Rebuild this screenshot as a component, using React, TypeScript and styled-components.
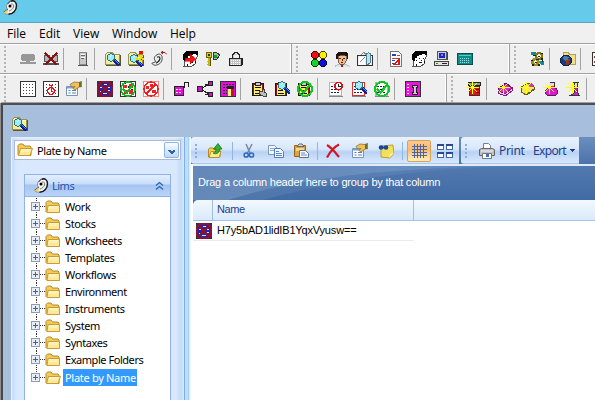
import React from 'react';
import styled, { createGlobalStyle } from 'styled-components';

const GlobalStyle = createGlobalStyle`
  *, *::before, *::after { box-sizing: border-box; }
  body { margin: 0; overflow: hidden; background: #efefef; }
`;

const ui = `'Noto Sans', 'Open Sans', sans-serif`;
const grid = `'Liberation Sans', Arial, sans-serif`;

/* ---------- application frame ---------- */

const Frame = styled.div`
  width: 595px;
  height: 400px;
  display: flex;
  flex-direction: column;
  overflow: hidden;
  background: #efefef;
  font: 11px/17px ${ui};
  color: #000;
`;

const TitleBar = styled.header`
  flex: none;
  height: 23px;
  padding-left: 2px;
  background: #66caea;
  border-bottom: 1px solid #58a5c4;
`;

const MenuBar = styled.nav`
  flex: none;
  display: flex;
  height: 20px;
  padding-left: 7px;
  background: #f0f0f0;
`;

const MenuItem = styled.span<{ $w: number }>`
  flex: none;
  width: ${p => p.$w}px;
  font: 12px/21px 'Open Sans', 'Noto Sans', sans-serif;
  white-space: nowrap;
`;

const ToolRow = styled.div`
  flex: none;
  display: flex;
  height: 30px;
  border-top: 1px solid #a0a0a0;
  box-shadow: inset 0 1px 0 #fff;
`;

const Grip = styled.span`
  flex: none;
  width: 2px;
  height: 26px;
  margin: 0 13px 0 4px;
  background: repeating-linear-gradient(#b4b4b4 0 2px, transparent 2px 4px);
`;

const Band = styled.div<{ $w: number }>`
  flex: none;
  display: flex;
  align-items: center;
  width: ${p => p.$w}px;
  height: 29px;
  padding-top: 1px;
  border-right: 1px solid #a0a0a0;
  box-shadow: inset -1px 0 0 #fff;
  &:first-child ${Grip} { margin-right: 14px; }
`;

const Slot = styled.span`
  flex: none;
  width: 16px;
  height: 16px;
  margin-right: 7px;
  svg { display: block; }
`;

const Divider = styled.i`
  flex: none;
  width: 1px;
  height: 22px;
  margin: 0 10px 0 -3px;
  background: #a3a3a3;
`;

/* ---------- child window ---------- */

const Child = styled.main`
  flex: 1;
  display: flex;
  flex-direction: column;
  border-top: 2px solid #4d4f55;
  border-left: 2px solid #45474d;
  margin-left: 1px;
  background: #a7bfdd;
  box-shadow: -1px 0 0 #8d8d8d, 0 -1px 0 #a0a0a0;
`;

const ChildTools = styled.div`
  flex: none;
  height: 32px;
  padding: 11px 0 0 9px;
  svg { display: block; }
`;

const Split = styled.div`
  flex: 1;
  display: flex;
  min-height: 0;
  padding-left: 8px;
`;

const SidePane = styled.aside`
  flex: none;
  width: 173px;
  padding: 2px 3px 0 2px;
  border-left: 1px solid #f1f6fd;
  border-top: 1px solid #e4effc;
  background: linear-gradient(90deg, #c8dcfa, #d9e8fd 5px 164px, #c3d9f8 169px, #dceafd);
`;

const Combo = styled.div`
  display: flex;
  align-items: center;
  width: 167px;
  height: 20px;
  padding-left: 2px;
  border: 1px solid #adb9dc;
  background: #fff;
  svg { flex: none; }
`;

const ComboText = styled.span`
  flex: 1;
  padding-left: 4px;
  white-space: nowrap;
  letter-spacing: -0.4px;
`;

const ComboButton = styled.button`
  width: 15px;
  height: 16px;
  margin: 0 1px 0 0;
  padding: 0;
  border: 1px solid #8db3e3;
  border-radius: 2px;
  background: linear-gradient(#fafdff, #dcecfc 45%, #bcdaf8);
  svg { display: block; margin: 4px auto 0; }
`;

const NavGroup = styled.section`
  width: 147px;
  height: 240px;
  margin: 14px 0 0 10px;
  border: 1px solid #91b2e6;
  background: #fff;
`;

const NavHead = styled.h2`
  display: flex;
  align-items: center;
  height: 22px;
  margin: 0;
  padding: 0 6px 0 8px;
  font: 11px/22px ${ui};
  letter-spacing: -0.5px;
  color: #2154b3;
  background: linear-gradient(#e2efff, #c9defa 42%, #a5c4f0 48%, #b9d4f8);
  border-bottom: 1px solid #91b2e6;
  span { flex: 1; padding-left: 3px; }
`;

const Tree = styled.ul`
  list-style: none;
  margin: 0;
  padding: 1px 0 0 6px;
`;

const Node = styled.li`
  display: flex;
  align-items: center;
  height: 17px;
  svg { flex: none; }
  &:last-child { margin-top: 1px; }
`;

const NodeText = styled.span<{ $sel?: boolean; $ls: number }>`
  height: 17px;
  margin-left: 2px;
  padding: 0 1px 0 2px;
  line-height: 17px;
  letter-spacing: ${p => p.$ls}px;
  white-space: nowrap;
  color: ${p => (p.$sel ? '#fff' : '#000')};
  background: ${p => (p.$sel ? '#3399ff' : 'transparent')};
`;

const Splitter = styled.div`
  flex: none;
  width: 7px;
  background: linear-gradient(90deg, #7eb0e4 0 1px, #bcdffb 1px 4px, #a6d0f6 4px 5px, #d9ebfd 5px 6px, #f2f8ff 6px);
`;

const ListPane = styled.section`
  flex: 1;
  display: flex;
  flex-direction: column;
  min-width: 0;
  background: #fff;
`;

const ListTools = styled.div`
  flex: none;
  display: flex;
  height: 27px;
  background: linear-gradient(#6a8fc0, #4b73aa);
`;

const Strip = styled.div<{ $w: number }>`
  flex: none;
  display: flex;
  align-items: center;
  width: ${p => p.$w}px;
  margin-right: 2px;
  height: 27px;
  padding-left: 4px;
  border-radius: 3px 0 0 3px;
  background: linear-gradient(#eaf3fe, #d7e7fa 45%, #b8d2f4 55%, #d8e8fc 96%, #89addd);
  svg { flex: none; display: block; }
`;

const StripGrip = styled.i<{ $gap: number }>`
  flex: none;
  width: 2px;
  height: 14px;
  margin-right: ${p => p.$gap}px;
  background: repeating-linear-gradient(#8aaddd 0 2px, transparent 2px 4px);
`;

const Cell = styled.span<{ $r: number }>`
  flex: none;
  width: 16px;
  margin-right: ${p => p.$r}px;
`;

const StripDivider = styled.i<{ $r: number }>`
  flex: none;
  width: 1px;
  height: 18px;
  margin-right: ${p => p.$r}px;
  background: #91b5e6;
`;

const Pressed = styled.span`
  display: flex;
  align-items: center;
  justify-content: center;
  flex: none;
  width: 24px;
  height: 22px;
  margin-right: 6px;
  border: 1px solid #d8a05a;
  border-radius: 2px;
  background: linear-gradient(#fbc98c, #fdb970 45%, #fecb85 60%, #fff0b8);
`;

const StripText = styled.span<{ $w: number; $ls: number }>`
  width: ${p => p.$w}px;
  flex: none;
  font: 12px/16px ${ui};
  letter-spacing: ${p => p.$ls}px;
  color: #1e3e8c;
`;

const GroupArea = styled.div`
  flex: none;
  display: grid;
  height: 36px;
  margin-left: 2px;
  border-top: 2px solid #dfebf8;
  > * { grid-area: 1 / 1; }
`;

const GroupText = styled.span`
  padding-left: 5px;
  font: 11px/33px ${grid};
  letter-spacing: -0.2px;
  color: #fff;
  white-space: nowrap;
`;

const HeaderWrap = styled.div`
  flex: none;
  margin-left: 2px;
  background: #426ca4;
`;

const HeaderRow = styled.div`
  display: flex;
  height: 21px;
  border-bottom: 1px solid #a5c3e8;
  border-top-left-radius: 5px;
  background: linear-gradient(#f3f8fe, #e6f1fd 50%, #d9e9fc);
`;

const HeaderCell = styled.div<{ $w: number }>`
  flex: none;
  width: ${p => p.$w}px;
  padding-left: 4px;
  font: 11px/19px ${grid};
  letter-spacing: -0.4px;
  color: #1e3e8c;
  border-right: 1px solid #9fbee6;
`;

const Row = styled.div`
  display: flex;
  align-items: center;
  width: 221px;
  height: 20px;
  margin-left: 2px;
  padding-left: 3px;
  border-bottom: 1px solid #ebebeb;
`;

const RowText = styled.span`
  padding: 0 0 1px 5px;
  font: 11px/17px ${grid};
  letter-spacing: -0.17px;
  white-space: nowrap;
`;

/* ---------- icons ---------- */

const I = ({ children, w = 16, h = 16, soft }: { children: React.ReactNode; w?: number; h?: number; soft?: boolean }) => (
  <svg width={w} height={h} viewBox={`0 0 ${w} ${h}`} shapeRendering={soft ? 'auto' : 'crispEdges'} fill="none">
    {children}
  </svg>
);

const Burst = () => (
  <path d="M6.500 1v12M0 6.500h13M2 2l9 9M11 2l-9 9" stroke="#ffff10" strokeWidth="1.400" />
);

const Glass = ({ x = 0, y = 0 }: { x?: number; y?: number }) => (
  <g transform={`translate(${x} ${y})`}>
    <path d="M8.500 8.500l6 6" stroke="#1020a0" strokeWidth="3" />
    <path d="M9.500 8.500l5 5" stroke="#38a8f0" />
    <circle cx="6" cy="6.500" r="3.600" fill="#98f0ff" stroke="#30707c" />
    <path d="M4.500 6.500l2-2" stroke="#fff" />
  </g>
);

const FinderFolder = () => (
  <>
    <path d="M.5 13V3.500l2-2h5l1 2h6V13z" fill="#f5eca0" stroke="#9a9350" />
    <path d="M2 4.500h12" stroke="#fffbd0" />
    <path d="M15.500 4v10H1" stroke="#5a5530" />
  </>
);

const Swan = () => (
  <I soft>
    <path d="M8.500 1.500c3-1.700 6 .3 6 4 0 5-3.500 8.700-8 8.700-3 0-5-1-5-2.300L6 9.700C3.500 8 4 3 8.500 1.500z" fill="#f2f2f2" stroke="#8a8a8a" />
    <path d="M8.500 1.300c3.200-1.500 6 .5 6 4.200 0 5-3.500 8.700-8 8.700" stroke="#151515" strokeWidth="1.400" />
    <path d="M6 4c0-1 1-2 2-2.300M5.500 9.500L2 12" stroke="#333" />
    <path d="M9 4c2.500-.5 3 1.500 2.500 3-.7 2-2.500 3.500-4.500 4" stroke="#777" />
    <circle cx="8" cy="6" r="1.500" fill="#000" />
    <path d="M1.500 12.500l3-2.500 1.500 1.500-2 2z" fill="#e8d34a" />
  </I>
);

const Server = () => (
  <I><path d="M5.500 1.500h7v12h-7z" fill="#c9c9c9" stroke="#8a8a8a" /><path d="M7 3.500h4M7 6.500h4" stroke="#fff" /><path d="M7 4.500h4M7 7.500h3" stroke="#666" /><path d="M12.500 2v12" stroke="#555" /><path d="M4 14.500h10" stroke="#555" /></I>
);

const Plate = ({ clock, cross, check, slash }: { clock?: boolean; cross?: boolean; check?: boolean; slash?: boolean }) => (
  <I>
    <rect x=".5" y=".5" width="15" height="15" fill={cross ? '#2222b8' : '#fff'} stroke={slash ? '#e88' : '#333'} />
    {!check && !slash && !cross && [3, 6, 9, 12].map(y => <path key={y} d={`M3 ${y + 0.5}h11`} stroke="#444" strokeWidth="1.500" strokeDasharray="1 2" />)}
    {clock && <><circle cx="8" cy="10" r="3.500" fill="#fff" stroke="#e81010" strokeWidth="1.500" /><path d="M8 4v6h2M6 4.500h4" stroke="#e81010" /></>}
    {cross && <><path d="M7 3.500h3M3 6.500h2M11 6.500h2M7 7.500h1M3 10.500h2M11 9.500h2M6 12.500h4M9 5.500h1" stroke="#dfe0ff" /><path d="M4 1h8l3 3v8l-3 3H4l-3-3V4z" stroke="#8a1428" strokeWidth="1.500" /><path d="M3 3l10 10M13 3L3 13" stroke="#8a1428" strokeWidth="2" /></>}
    {check && <><path d="M3 4h4v3H3zM9 3h4v4H9zM4 9h4v4H4zM9 9h4v4H9z" fill="#ee2020" /><path d="M5 2h1v1H5zM8 5h1v2H8zM11 8h2v1h-2z" fill="#222" /><circle cx="8" cy="8" r="7" stroke="#10b820" strokeWidth="1.800" /><path d="M3 8l3.500 3.500L13 4" stroke="#10b820" strokeWidth="2" /></>}
    {slash && <><circle cx="8" cy="8" r="7" stroke="#f02020" strokeWidth="1.500" /><path d="M3 13L13 3" stroke="#f02020" strokeWidth="1.600" /><path d="M3 5h3v3H3zM9 9h4v3H9zM7 3h3v3H7zM4 10h2v2H4z" fill="#f02020" /></>}
  </I>
);

const Properties = () => (
  <I soft>
    <path d="M.5 5.500h11v9H.5z" fill="#fdfdff" stroke="#7793b8" />
    <path d="M1 6h10v1.500H1z" fill="#6ea5de" />
    <path d="M2.500 9.500h2M2.500 12h2M6 9.500h4M6 12h4" stroke="#5580b4" />
    <path d="M4 3.500l4-2.500 5 .5 3-1v5l-3 .5-4 3-2-1.500 2-2-3 .5z" fill="#f0c060" stroke="#937024" strokeWidth=".8" />
    <path d="M13 1l2.500-.5V6L13 6z" fill="#66722c" />
  </I>
);

const Head = ({ red }: { red?: boolean }) => (
  <I>
    <path d="M2 15l1-4-1-3 1-5 4-2h8v5l-2 4v3l-3 2z" fill="#fff" stroke="#555" />
    <path d="M1 8V3l3-3h12v4h-2V3h-3v1H8v1H6v2H4v3H2z" fill="#000" />
    <path d="M8 7h1v1H8zM12 7h1v1h-1zM10 9h1v1h-1zM8 11h3v1H8zM5 9h1v1H5zM13 10h1v2h-1zM5 13h1v2H5z" fill="#111" />
    {red && <path d="M3 7h5V3l6 5-6 5v-3H3z" fill="#f51414" stroke="#b00000" strokeWidth=".5" />}
  </I>
);

const CheckRing = () => (
  <><circle cx="8" cy="8" r="7" stroke="#12c424" strokeWidth="2" /><path d="M3 8l3.500 3.500L13 4" stroke="#12c424" strokeWidth="2.200" /></>
);

const Clip = ({ kind }: { kind: 'hand' | 'glass' | 'check' }) => (
  <I>
    <path d="M1.500 2.500h11v12h-11z" fill="#a01010" stroke="#1b1b1b" />
    <path d="M3 4h8v10H3z" fill="#ffec68" />
    <path d="M4.500 1h5v3h-5z" fill="#ccc" stroke="#222" />
    <path d="M4 6.500h6M4 9.500h5M4 12.500h6" stroke="#111" />
    {kind === 'hand' && <path d="M8.500 10.500h3V8h2v3l1.500 1v3h-3l-3.500-2z" fill="#bbb" stroke="#444" />}
    {kind === 'glass' && <Glass x={2} y={-2} />}
    {kind === 'check' && <CheckRing />}
  </I>
);

const Sheet = ({ kind }: { kind: 'clock' | 'glass' | 'check' }) => (
  <I>
    <path d="M1.500 1.500h12v13h-12z" fill="#fff" stroke={kind === 'glass' ? '#e03030' : '#b4b4b4'} />
    <path d="M3 5.500h9M3 8.500h9M3 11.500h9" stroke="#202050" strokeWidth="1.500" strokeDasharray="2 1" />
    <path d="M1 15.500h14" stroke="#888" />
    {kind === 'clock' && <><circle cx="10.500" cy="5" r="3.600" fill="#fff" stroke="#d81616" strokeWidth="1.800" /><path d="M10.500 3v2.500h2" stroke="#222" /></>}
    {kind === 'glass' && <Glass x={2} y={-2} />}
    {kind === 'check' && <CheckRing />}
  </I>
);

const FolderIcon = ({ open }: { open?: boolean }) => (
  <I soft h={14}>
    <path d="M1 11.500V2.500L2.500 1H6l1.500 2H13l1 1v8.500H2z" fill="#f2cc55" stroke="#b6882c" />
    <path d={open ? 'M3.500 5.500h12L13 12.500H1.500z' : 'M3 5.500h11.500v7H2z'} fill="#ffe998" stroke="#c89b35" />
    <path d="M4 6.500h9M3.500 8h9" stroke="#fff6cc" />
  </I>
);

const icons: Record<string, React.ReactNode> = {
  net: <I><path d="M2 3h12v1h1v5h-1v1H2V9H1V4h1zM0 11h16v2H0z" fill="#989898" /><path d="M6 10h4v1H6z" fill="#989898" /></I>,
  netOff: <I><path d="M1.500 4.500h5v6h-5zM9.500 4.500h5v6h-5z" fill="#b4b4b4" stroke="#555" /><path d="M0 12.500h16" stroke="#555" strokeWidth="2" /><path d="M2 2l12 12M14 2L2 14" stroke="#8b1010" strokeWidth="2" /></I>,
  server: <Server />,
  find: <I><FinderFolder /><Glass /></I>,
  findRun: <I><FinderFolder /><Glass y={1} /><path d="M11 0h4v3h-4z" fill="#e81010" /><path d="M10 5h4l-2 3h4M10 7l-2 2M12 8v3" stroke="#f5d900" strokeWidth="1.500" /><path d="M9 4h1M13 8h1M10 10l-2 1" stroke="#222" /></I>,
  swanBack: <I soft><g transform="translate(0 2) scale(.86)"><path d="M7 2c3-2 6 0 6 4 0 5-4 9-10 8l-2-2 5-2C3 8 3 4 7 2z" fill="#eee" stroke="#333" /><path d="M7 5c3-2 4 1 3 3s-2 3-4 4" stroke="#222" strokeWidth="1.400" /></g><path d="M10 1.500h4l2 2M12 0l-2 1.500L12 3" stroke="#a01818" /></I>,
  headArrow: <Head red />,
  keys: <I><path d="M1.500 1.500h5v5h-5z" fill="#e0cc20" stroke="#6b6408" /><path d="M3 3h2v2H3z" fill="#333" /><path d="M3 7h3v8H3zM2 10h1v1H2zM2 13h1v1H2z" fill="#c8b41a" /><path d="M5.500 7v8" stroke="#575000" /><path d="M8 2l3-1 4 3-3 4-3 1z" fill="#a8b8a8" stroke="#333" /><path d="M9 4h3v3H9z" fill="#10a020" /></I>,
  lock: <I><path d="M4.500 9V4l2-2.500h3l2 2.500v5" stroke="#222" strokeWidth="1.400" /><path d="M5.500 8V5l1.500-2h2" stroke="#ccc" /><path d="M1.500 7.500h12v7h-12z" fill="#c4c4c4" stroke="#222" /><path d="M3 9.500h10M3 11.500h10M3 13.500h10" stroke="#fff" strokeDasharray="1 1" /><path d="M14.500 7v7" stroke="#222" /></I>,
  balls: <I><circle cx="4" cy="4" r="3.700" fill="#f01010" stroke="#400" /><circle cx="12" cy="4" r="3.700" fill="#ffef00" stroke="#440" /><circle cx="4" cy="12" r="3.700" fill="#10d820" stroke="#040" /><circle cx="12" cy="12" r="3.700" fill="#1010d8" stroke="#004" /></I>,
  person: <I><path d="M1 16v-1l4-2h6l4 2v1z" fill="#dce6ee" stroke="#8b97a0" strokeWidth=".5" /><path d="M4 4h8v6l-2 3H6l-2-3z" fill="#f0bd94" stroke="#6a4020" strokeWidth=".8" /><path d="M2 8V3l2-2h8l2 2v5h-1V5h-2V4H6v1H4v3z" fill="#1a1412" /><path d="M5 7.500h2M9 7.500h2M7 11.500h2M8 8v2" stroke="#432a1c" /><path d="M7 14h2v2H7z" fill="#a01818" /></I>,
  attach: <I><path d="M.5 4.500h15v10H.5z" fill="#eee" stroke="#333" /><path d="M2 6h6v8H2z" fill="#fff" /><path d="M4 4L7 1l2 3M3 11l5-5" stroke="#888" /><path d="M9.500 13V2.500h1l1-1 1.500 1V12l-2 1.500z" fill="#bfe0e8" stroke="#4e8293" /></I>,
  report: <I><path d="M2.500.5h8l3 3v12h-11z" fill="#fff" stroke="#777" /><path d="M4 3h4v2H4z" fill="#24b" /><path d="M9 4.500h3M4 7.500h8" stroke="#c04040" /><path d="M4 9.500h3M4 12.500h2" stroke="#2840c0" /><path d="M6 13.500l5-5v5z" fill="#fff" stroke="#e01818" strokeWidth="1.200" /></I>,
  head: <Head />,
  computer: <I><path d="M3.500.5h9v8h-9z" fill="#d4d4d4" stroke="#555" /><path d="M5 2h6v5H5z" fill="#1820d8" /><path d="M7 3h2v2H7z" fill="#7c86ff" /><path d="M13.500 1v8M.5 10.500h14v4H.5z" fill="#e2e2e2" stroke="#444" /><path d="M8 12.500h5" stroke="#222" /><path d="M2 12.500h2" stroke="#10a010" /></I>,
  keypad: <I><path d="M.5 2.500h15v11H.5z" fill="#108b8b" stroke="#054f4f" /><path d="M2 4.500h12" stroke="#60c4c4" /><path d="M3 7.500h10M3 9.500h10M3 11.500h10" stroke="#94dddd" strokeDasharray="1 1" /></I>,
  gears: <I><path d="M2 2h3v3M11 11h2v3" stroke="#108c98" strokeWidth="3" /><circle cx="10" cy="5" r="3" stroke="#7e7712" strokeWidth="2.600" /><circle cx="6.500" cy="11" r="3" stroke="#9a9218" strokeWidth="2.600" /><path d="M4 4h3v1H4zM7 8h3v1H7zM12 2h2v1h-2zM3 13h2v2H3zM9 13h2v2H9zM12 7h2v2h-2zM9 5h2v1H9zM6 11h2v1H6zM2 9h2v1H2zM13 9h1v2h-1z" fill="#222" /></I>,
  globe: <I><path d="M3.500 7V1.500h5l1 2h6v10h-7" fill="#f1e088" stroke="#b5a050" /><circle cx="6" cy="9.500" r="5.500" fill="#193f7b" stroke="#112244" /><path d="M2 7l3-2 4 1-1 3-3 1z" fill="#4c7eb0" /><path d="M6 9l4-1-1 5-3 1z" fill="#9c3622" /></I>,
  list: <I><path d="M1.500 1.500h14v13h-14z" fill="#fff" stroke="#333" /><path d="M3 5.500h12M3 10.500h12" stroke="#c22" strokeWidth="2" /></I>,
  plate: <Plate />,
  plateClock: <Plate clock />,
  props: <Properties />,
  plateCross: <Plate cross />,
  plateCheck: <Plate check />,
  plateSlash: <Plate slash />,
  pin: <I><path d="M.5 5.500h9v9h-9z" fill="#e010d8" stroke="#222" /><path d="M2 8.500h6M2 11.500h6" stroke="#fff" strokeDasharray="2 1" /><path d="M10.500 7V1.500h4V6" stroke="#222" strokeWidth="1.700" /></I>,
  branch: <I><path d="M.5 5.500h5v5h-5zM11.500.5h4v4h-4zM11.500 11.500h4v4h-4z" fill="#d010c8" stroke="#222" /><path d="M6 7l5-4M6 9l5 4" stroke="#222" /><path d="M8 3h2v2M8 13h2v-2" stroke="#222" /></I>,
  plateTool: <I><path d="M.5.5h15v15H.5z" fill="#e010d8" stroke="#333" /><path d="M3 3.500h11M3 6.500h4M3 9.500h4M3 12.500h4" stroke="#222" strokeDasharray="2 1" /><path d="M7 5h7v3H7z" fill="#222" /><path d="M8 8h3v7H8z" fill="#fff08a" /><path d="M11 8h3v7h-3z" fill="#c01818" /></I>,
  clipHand: <Clip kind="hand" />, clipFind: <Clip kind="glass" />, clipCheck: <Clip kind="check" />,
  sheetClock: <Sheet kind="clock" />, sheetFind: <Sheet kind="glass" />, sheetCheck: <Sheet kind="check" />,
  info: <I><path d="M.5.5h15v15H.5z" fill="#e616dc" stroke="#333" /><path d="M3 3v10" stroke="#fff" strokeWidth="2" strokeDasharray="1 2" /><path d="M7.500 4.500h5v2h-1v5h1v2h-5v-2h1v-5h-1z" fill="#ccc" stroke="#222" /></I>,
  beaker: <I><path d="M3.500 5.500h10v9h-10z" fill="#e81010" stroke="#333" /><path d="M2.500 1.500h12v3h-12z" fill="#999" stroke="#222" /><path d="M10 8.500h3M10 11.500h3" stroke="#770808" /><Burst /></I>,
  newBook: <I><path d="M1 8l8-6 6 5-8 8z" fill="#dc2bcb" stroke="#5c1266" /><path d="M2 10l6 3 7-6v3l-7 5-7-3z" fill="#f2c4ef" stroke="#7c1880" /><Burst /></I>,
  newBox: <I><path d="M1 6l8-4 6 5-9 7-5-3z" fill="#eee072" stroke="#685b12" /><path d="M8 4l3-2 3 3-3 2z" fill="#e22bd0" stroke="#555" strokeWidth=".5" /><path d="M3 12l4 2 8-6" stroke="#685b12" /><Burst /></I>,
  newFlask: <I><path d="M6.500 1.500h5v4l3 4v3l-2 2h-8l-2-2v-3l4-4z" fill="#df18ce" stroke="#502050" /><path d="M7 2h4v3H7z" fill="#ddd" /><Burst /></I>,
  newCylinder: <I><path d="M8.500 1.500h3v10l2 3h-9l4-3z" fill="#d818d0" stroke="#334" /><path d="M9 2h2v4H9z" fill="#ddd" /><path d="M6 1.500h7M3 14.500h11" stroke="#334" /><Burst /></I>,
};

const Tools = ({ names }: { names: string }) => (
  <>
    {names.split(' ').map((n, i) => (n === '|' ? <Divider key={i} /> : <Slot key={i}>{icons[n]}</Slot>))}
  </>
);

const Expander = ({ last }: { last?: boolean }) => (
  <I w={14} h={17}>
    <path d={last ? 'M5.500 0v5' : 'M5.500 0v17'} stroke="#333" strokeDasharray="1 1" />
    <path d="M9 8.500h5" stroke="#333" strokeDasharray="1 1" />
    <rect x=".5" y="4.500" width="8" height="8" rx="1" fill="#e9eef6" stroke="#8f9cb5" />
    <path d="M2 8.500h5M4.500 6v5" stroke="#4c608c" />
  </I>
);

const nodes: [string, number][] = [
  ['Work', -0.4], ['Stocks', -0.4], ['Worksheets', -0.4], ['Templates', -0.4], ['Workflows', -0.35], ['Environment', -0.42],
  ['Instruments', -0.35], ['System', -0.4], ['Syntaxes', -0.4], ['Example Folders', -0.45], ['Plate by Name', -0.3],
];

export default function App() {
  return (
    <Frame>
      <GlobalStyle />
      <TitleBar><Swan /></TitleBar>
      <MenuBar>
        <MenuItem $w={32}>File</MenuItem>
        <MenuItem $w={34}>Edit</MenuItem>
        <MenuItem $w={39}>View</MenuItem>
        <MenuItem $w={58}>Window</MenuItem>
        <MenuItem $w={40}>Help</MenuItem>
      </MenuBar>
      <ToolRow>
        <Band $w={292}><Grip /><Tools names="net netOff | server | find findRun swanBack | headArrow keys lock" /></Band>
        <Band $w={218}><Grip /><Tools names="balls person attach | report head computer keypad" /></Band>
        <Band $w={140}><Grip /><Tools names="gears | globe | list" /></Band>
      </ToolRow>
      <ToolRow>
        <Band $w={447}><Grip /><Tools names="plate plateClock props | plateCross plateCheck plateSlash | pin branch plateTool | clipHand clipFind clipCheck | sheetClock sheetFind sheetCheck | info" /></Band>
        <Band $w={200}><Grip /><Tools names="beaker | newBook newBox newFlask newCylinder |" /></Band>
      </ToolRow>
      <Child>
        <ChildTools>{icons.find}</ChildTools>
        <Split>
          <SidePane>
            <Combo>
              <FolderIcon open />
              <ComboText>Plate by Name</ComboText>
              <ComboButton><I w={7} h={5}><path d="M0 0h2l1.500 1.500L5 0h2v1L3.500 4.500 0 1z" fill="#31629f" /></I></ComboButton>
            </Combo>
            <NavGroup>
              <NavHead>
                <Swan />
                <span>Lims</span>
                <I soft w={9} h={10}><path d="M1 4.500l3.500-3 3.500 3M1 8.500l3.500-3 3.500 3" stroke="#2d62b8" strokeWidth="1.300" /></I>
              </NavHead>
              <Tree>
                {nodes.map(([name, ls], i) => {
                  const last = i === nodes.length - 1;
                  return (
                    <Node key={name}>
                      <Expander last={last} />
                      <FolderIcon open={last} />
                      <NodeText $sel={last} $ls={ls}>{name}</NodeText>
                    </Node>
                  );
                })}
              </Tree>
            </NavGroup>
          </SidePane>
          <Splitter />
          <ListPane>
            <ListTools>
              <Strip $w={268}>
                <StripGrip $gap={10} />
                <Cell $r={9}>
                  <I soft><path d="M1.500 14V6l1.500-1h3l1 1.500h6V14z" fill="#f4d04f" stroke="#b88a20" /><path d="M2 14.500l2-6h10l-2 6z" fill="#ffeb92" stroke="#bd9227" /><path d="M6 10c2 0 3-1 3-4H6.500L11 .5 15 6h-2.500c0 4-3 6-6.500 4z" fill="#35b037" stroke="#157519" strokeWidth=".8" /></I>
                </Cell>
                <StripDivider $r={8} />
                <Cell $r={11}>
                  <I soft><path d="M5 1l4 9M11 1L6.500 10" stroke="#7787a2" strokeWidth="1.500" /><circle cx="5.200" cy="12" r="2.100" stroke="#2f66c0" strokeWidth="1.500" /><circle cx="10.500" cy="12" r="2.100" stroke="#2f66c0" strokeWidth="1.500" /></I>
                </Cell>
                <Cell $r={9}>
                  <I soft><path d="M.5 2.500h6l3 3v6h-9z" fill="#f4f9ff" stroke="#7699ca" /><path d="M2 5.500h4M2 7.500h4" stroke="#86aadc" /><path d="M6.500 5.500h6l3 3v6h-9z" fill="#f4f9ff" stroke="#5479b5" /><path d="M8 8.500h3M8 10.500h6M8 12.500h6" stroke="#4c86d8" /></I>
                </Cell>
                <Cell $r={8}>
                  <I soft><path d="M1.500 2.500h11v11h-11z" fill="#dda540" stroke="#966515" /><path d="M4 3.500L6 1h3l2 2.500z" fill="#ddd" stroke="#666" /><path d="M3 5h8v3H3z" fill="#f5d98a" /><path d="M6.500 7.500h6l3 3v4h-9z" fill="#f5f9ff" stroke="#666f82" /><path d="M8 10h4M8 12h6" stroke="#5c8dd0" /></I>
                </Cell>
                <StripDivider $r={7} />
                <Cell $r={11}>
                  <I soft><path d="M2 2c5 3 8 7 12 12M14 1.500C9 4 5 9 2 14.500" stroke="#cf1a2b" strokeWidth="2.200" /></I>
                </Cell>
                <Cell $r={10}><Properties /></Cell>
                <Cell $r={8}>
                  <I soft><path d="M3 3l12-1 1 8-4 5-9-1z" fill="#f5df58" stroke="#aa8f20" strokeWidth=".8" /><path d="M11 15l1-4 4-1z" fill="#fff5b0" /><circle cx="3" cy="4.500" r="2.300" fill="#1746a0" /><circle cx="8" cy="4.500" r="2.300" fill="#1746a0" /><path d="M3 4.500h5" stroke="#1746a0" strokeWidth="2" /></I>
                </Cell>
                <StripDivider $r={4} />
                <Pressed><I w={15} h={14}><path d="M0 2.500h15M0 5.500h15M0 8.500h15M0 11.500h15M2.500 0v14M5.500 0v14M8.500 0v14M11.500 0v14" stroke="#4866a4" /></I></Pressed>
                <I>{[[0, 1], [9, 1], [0, 9], [9, 9]].map(([x, y]) => <g key={`${x}-${y}`}><rect x={x + 0.5} y={y + 0.5} width="6" height="5" fill="#fff" stroke="#4266ae" /><path d={`M${x} ${y + 0.5}h7`} stroke="#274994" strokeWidth="2" /></g>)}</I>
              </Strip>
              <Strip $w={118}>
                <StripGrip $gap={12} />
                <Cell $r={4}>
                  <I soft><path d="M4.500 6V.5h5l2 2V6" fill="#fff" stroke="#70809a" /><path d="M.5 6.500l2-1h11l2 1v6H.5z" fill="#bfc1c7" stroke="#666" /><path d="M2 8h12" stroke="#f3f3f3" /><path d="M3.500 10.500h9v5h-9z" fill="#fff" stroke="#777" /><path d="M7 11h3v3H7z" fill="#3973c7" /></I>
                </Cell>
                <StripText $w={34} $ls={-0.3}>Print</StripText>
                <StripText $w={36} $ls={-0.65}>Export</StripText>
                <I w={6} h={3}><path d="M0 0h6L3 3z" fill="#1e3e8c" /></I>
              </Strip>
            </ListTools>
            <GroupArea>
              <svg width="402" height="34" viewBox="0 0 402 34">
                <defs>
                  <linearGradient id="ga" x2="1" y2="0"><stop offset="0" stopColor="#6488b8" /><stop offset=".5" stopColor="#698fbf" /><stop offset="1" stopColor="#547eb6" /></linearGradient>
                  <linearGradient id="gb" x2="0" y2="1"><stop offset="0" stopColor="#5279b0" /><stop offset="1" stopColor="#416ba3" /></linearGradient>
                </defs>
                <path d="M0 0h402v34H0z" fill="url(#ga)" />
                <path d="M35 34C100 13 190 2 315 0h87v34z" fill="url(#gb)" opacity=".65" />
                <path d="M70 34C150 12 240 2 330 0h72v34z" fill="url(#gb)" />
              </svg>
              <GroupText>Drag a column header here to group by that column</GroupText>
            </GroupArea>
            <HeaderWrap>
              <HeaderRow>
                <HeaderCell $w={20} />
                <HeaderCell $w={201}>Name</HeaderCell>
              </HeaderRow>
            </HeaderWrap>
            <Row>
              {icons.plateCross}
              <RowText>H7y5bAD1lidIB1YqxVyusw==</RowText>
            </Row>
          </ListPane>
        </Split>
      </Child>
    </Frame>
  );
}
